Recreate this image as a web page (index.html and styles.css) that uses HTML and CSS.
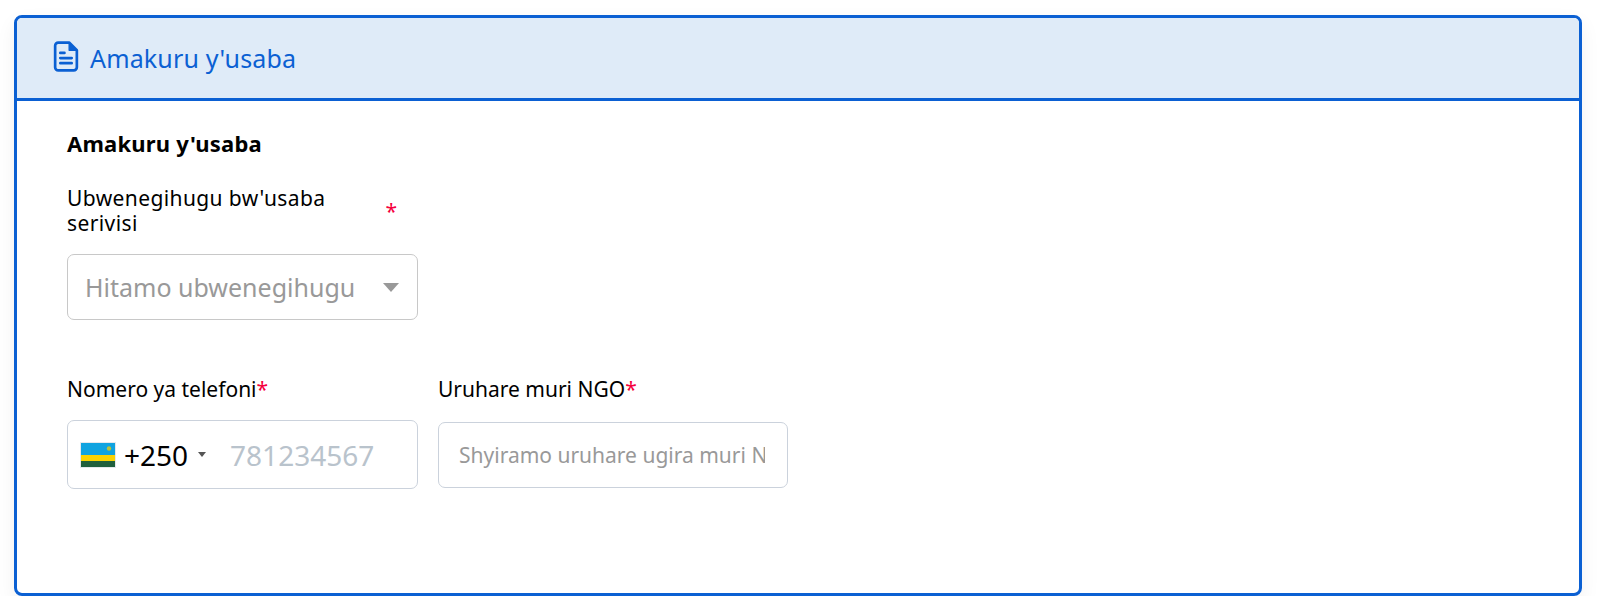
FILE: index.html
```html
<!DOCTYPE html>
<html>

<head>
  <meta charset="utf-8">
  <title>Amakuru y'usaba</title>
  <link rel="stylesheet" href="styles.css">
</head>

<body>
  <div class="card">
    <div class="card-head">
      <svg class="head-icon" viewBox="0 0 24 30" fill="none" stroke="currentColor" stroke-width="2.6" stroke-linejoin="round" stroke-linecap="round">
        <path d="M4.5 1.5h10.5l7.5 7.5v16.5a3 3 0 0 1-3 3h-15a3 3 0 0 1-3-3v-21a3 3 0 0 1 3-3z"/>
        <path d="M15 2v7h7" fill="currentColor" stroke-width="1.2"/>
        <path d="M6.5 11.5h4M6.5 16.500h11M6.500 21.500h11"/>
      </svg>
      <span>Amakuru y'usaba</span>
    </div>

    <div class="card-body">
      <h3>Amakuru y'usaba</h3>

      <div class="row row-one">
        <div class="field">
          <label class="label-split">
            <span>Ubwenegihugu bw'usaba serivisi</span>
            <span class="req">*</span>
          </label>
          <div class="select">
            <span>Hitamo ubwenegihugu</span>
            <i class="arrow"></i>
          </div>
        </div>
      </div>

      <div class="row">
        <div class="field">
          <label>Nomero ya telefoni<span class="req">*</span></label>
          <div class="phone">
            <svg class="flag" viewBox="0 0 34 24">
              <rect width="34" height="12" fill="#0fa3e0"/>
              <rect y="12" width="34" height="6" fill="#fad201"/>
              <rect y="18" width="34" height="6" fill="#20603d"/>
              <circle cx="28" cy="5.500" r="2.200" fill="#b9c23a"/>
            </svg>
            <span class="code">+250</span>
            <i class="caret"></i>
            <input type="text" placeholder="781234567">
          </div>
        </div>
        <div class="field field-ngo">
          <label>Uruhare muri NGO<span class="req">*</span></label>
          <input class="text-input" type="text" placeholder="Shyiramo uruhare ugira muri NGO">
        </div>
      </div>
    </div>
  </div>
</body>

</html>
```

FILE: styles.css
```css
* {
  box-sizing: border-box;
}

body {
  margin: 0;
  padding: 15px 18px 0 14px;
  background: #fff;
  font-family: "Noto Sans", "Open Sans", sans-serif;
  color: #000;
}

.card {
  height: 581px;
  border: 3px solid #0b60d3;
  border-radius: 8px;
  overflow: hidden;
  box-shadow: 0 8px 20px rgba(0, 0, 0, 0.06);
}

.card-head {
  display: flex;
  align-items: center;
  gap: 11px;
  height: 83px;
  padding: 0 0 0 36px;
  background: #dfebf8;
  border-bottom: 3px solid #0b60d3;
  color: #0b60d3;
  font-size: 25px;
  letter-spacing: 0.15px;
}

.head-icon {
  width: 26px;
  height: 31px;
  margin-bottom: 3px;
}

.card-body {
  padding: 28px 0 0 50px;
}

h3 {
  margin: 0 0 29px;
  font-size: 22px;
  line-height: 28px;
  font-weight: 700;
  letter-spacing: 0.2px;
}

.row {
  display: flex;
  gap: 20px;
}

.row-one {
  margin-bottom: 57px;
}

.field {
  width: 351px;
}

label {
  display: block;
  font-size: 21px;
  line-height: 25px;
  margin-bottom: 18px;
}

.label-split {
  display: flex;
  align-items: center;
  justify-content: space-between;
  height: 50px;
  margin-bottom: 18px;
  padding-right: 21px;
}

.label-split span:first-child {
  width: 275px;
  letter-spacing: 0.4px;
}

.req {
  color: #f5003d;
}

.select {
  display: flex;
  align-items: center;
  justify-content: space-between;
  height: 66px;
  padding: 0 18px 0 17px;
  border: 1px solid #c8c8c8;
  border-radius: 7px;
  color: #999;
  font-size: 25px;
}

.arrow {
  width: 0;
  height: 0;
  border-left: 8px solid transparent;
  border-right: 8px solid transparent;
  border-top: 9px solid #999;
}

.phone {
  display: flex;
  align-items: center;
  height: 69px;
  padding-left: 13px;
  border: 1px solid #cbd2dc;
  border-radius: 7px;
  font-size: 28px;
}

.flag {
  width: 34px;
  height: 24px;
  margin-right: 9px;
  outline: 1px solid #e4e8ec;
}

.caret {
  width: 0;
  height: 0;
  margin-left: 10px;
  border-left: 4px solid transparent;
  border-right: 4px solid transparent;
  border-top: 5px solid #555;
}

.phone input {
  flex: 1;
  min-width: 0;
  margin-left: 24px;
  border: none;
  outline: none;
  padding: 0;
  font-family: inherit;
  font-size: 28px;
}

.phone input::placeholder {
  color: #b9c3cc;
}

.field-ngo label {
  margin-bottom: 20px;
}

.text-input {
  display: block;
  width: 350px;
  height: 66px;
  padding: 0 22px 0 20px;
  border: 1px solid #cbd2dc;
  border-radius: 7px;
  outline: none;
  font-family: inherit;
  font-size: 21px;
}

.text-input::placeholder {
  color: #999;
}
```
